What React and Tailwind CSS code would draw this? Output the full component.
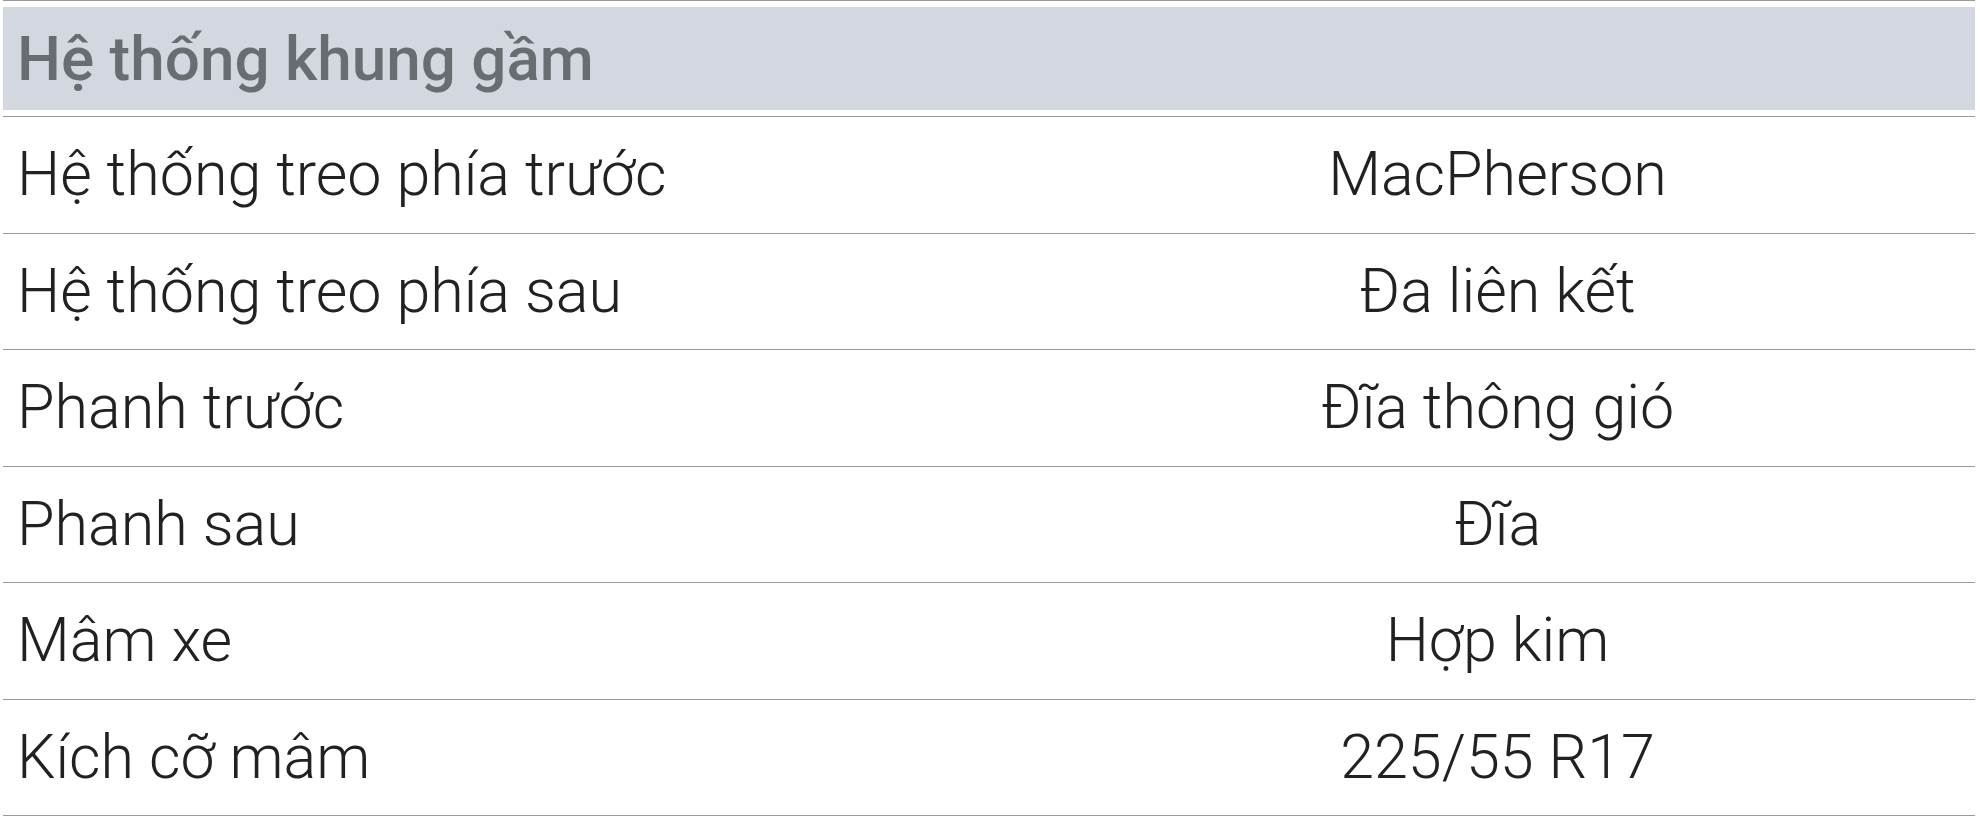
import React from 'react';

const rows = [
  { label: 'Hệ thống treo phía trước', value: 'MacPherson' },
  { label: 'Hệ thống treo phía sau', value: 'Đa liên kết' },
  { label: 'Phanh trước', value: 'Đĩa thông gió' },
  { label: 'Phanh sau', value: 'Đĩa' },
  { label: 'Mâm xe', value: 'Hợp kim' },
  { label: 'Kích cỡ mâm', value: '225/55 R17' },
];

function SpecRow({ label, value }) {
  return (
    <div className="grid h-[116.5px] grid-cols-[1017px_1fr] items-center border-b border-[#9a9a9a]">
      <div className="pl-[14px] text-[61px] font-light text-[#212121]">{label}</div>
      <div className="text-center text-[61px] font-light text-[#212121]">{value}</div>
    </div>
  );
}

export default function App() {
  return (
    <div className="min-h-screen bg-white font-['Roboto',sans-serif]">
      <div className="ml-[3px] w-[1972px]">
        {/* Section header */}
        <div className="border-t border-b border-[#9a9a9a] py-[6px]">
          <div className="flex h-[103px] items-center bg-[#d3d7df] pl-[14px]">
            <h2 className="text-[62px] font-medium text-[#696d72]">Hệ thống khung gầm</h2>
          </div>
        </div>

        {/* Specs */}
        {rows.map((row) => (
          <SpecRow key={row.label} label={row.label} value={row.value} />
        ))}
      </div>
    </div>
  );
}
